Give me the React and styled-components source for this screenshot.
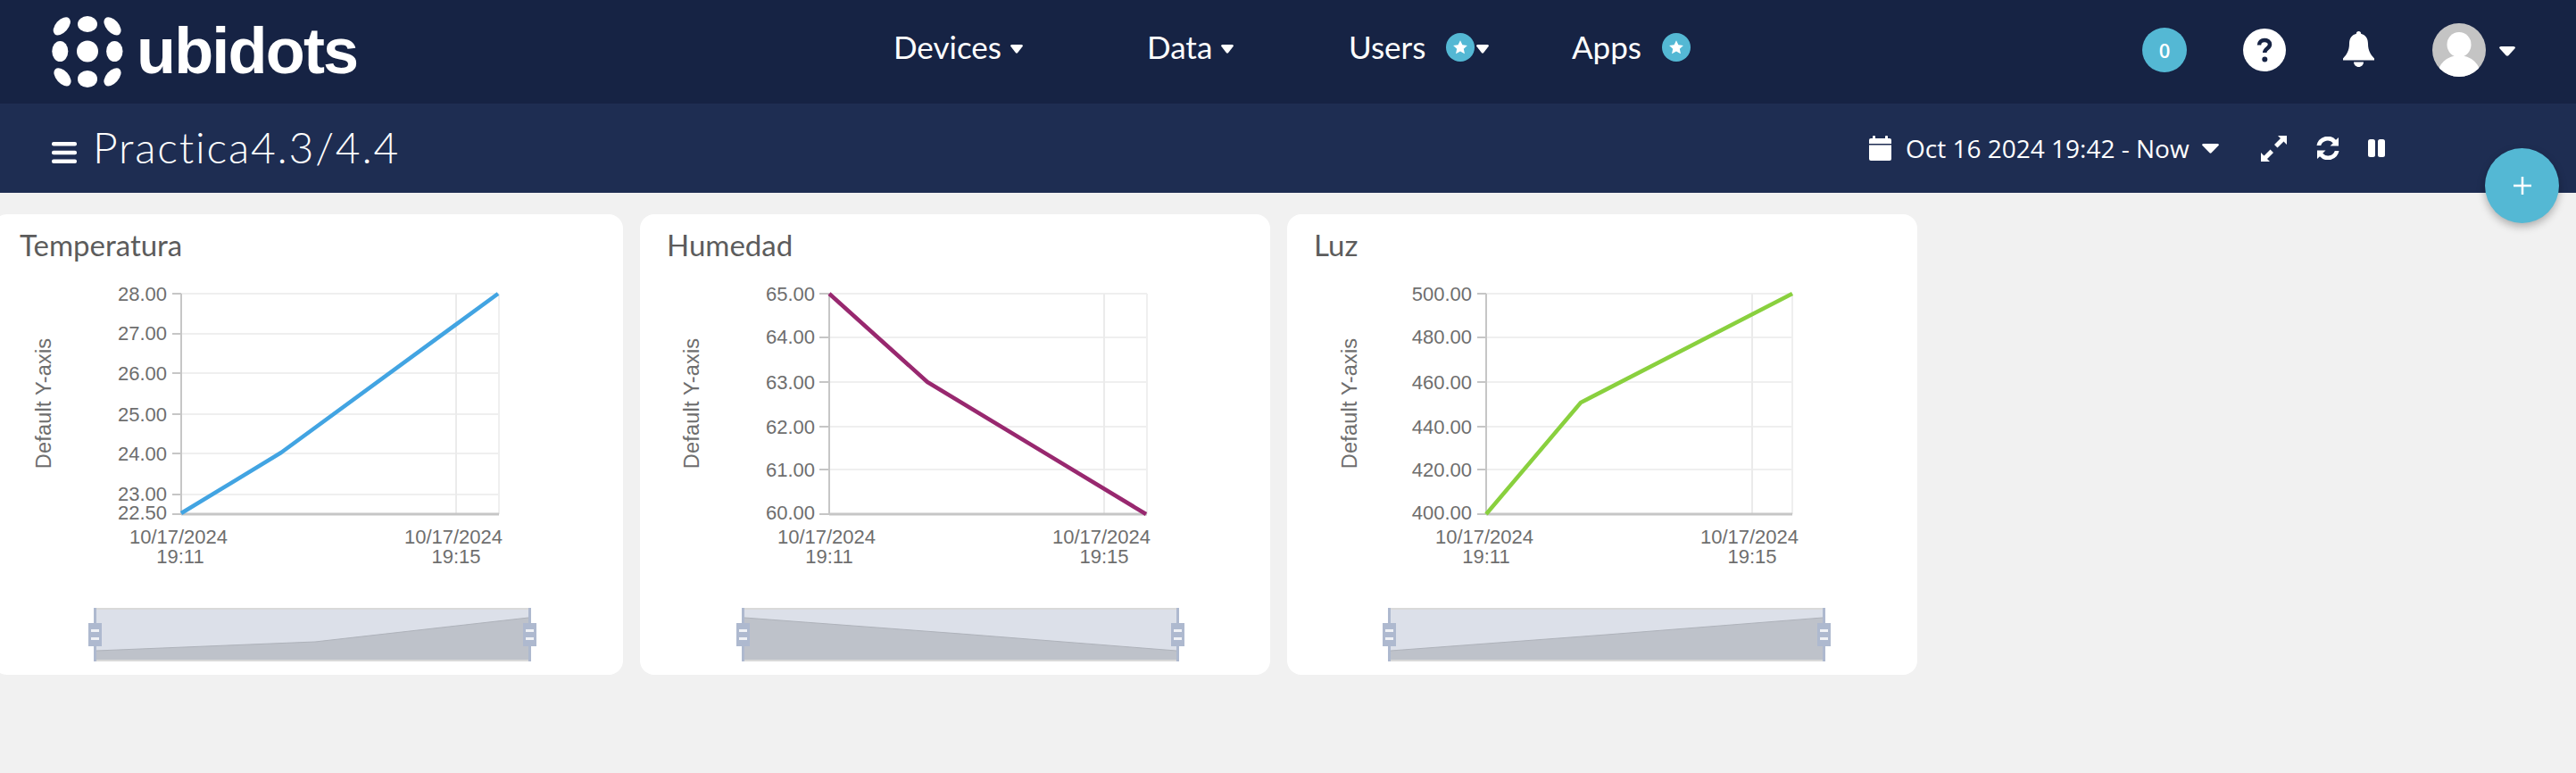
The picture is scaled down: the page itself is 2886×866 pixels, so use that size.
import React from 'react';
import styled, { createGlobalStyle } from 'styled-components';

const Global = createGlobalStyle`
  html, body { margin: 0; padding: 0; background: #f1f1f1; }
  body { width: 2886px; height: 866px; overflow: hidden; font-family: "Lato", "Liberation Sans", sans-serif; }
`;

const Page = styled.div`
  position: relative;
  width: 2886px;
  height: 866px;
  background: #f1f1f1;
  overflow: hidden;
`;

const TopBar = styled.header`
  display: flex;
  align-items: center;
  height: 116px;
  background: #162344;
  color: #fff;
  padding-left: 58px;
  box-sizing: border-box;
`;

const Logo = styled.div`
  display: flex;
  align-items: center;
  gap: 15px;
  width: 943px;
  flex: none;
  height: 100%;
`;

const LogoText = styled.span`
  font-family: "Liberation Sans", Arial, sans-serif;
  font-weight: 700;
  font-size: 72px;
  line-height: 1;
  letter-spacing: -1.8px;
  color: #fff;
  margin-top: -2px;
`;

const NavItem = styled.div`
  display: flex;
  align-items: center;
  width: ${p => p.$width}px;
  flex: none;
  font-size: 35px;
  font-weight: 400;
  gap: 10px;
  margin-top: -13px;
`;

const NavCaret = styled.svg`
  width: 14px;
  height: 10px;
  fill: #fff;
  flex: none;
  margin-top: 7px;
`;

const AvatarCaret = styled.svg`
  width: 18px;
  height: 11px;
  fill: #fff;
  flex: none;
  margin-top: -1px;
`;

const StarBadge = styled.span`
  display: inline-flex;
  align-items: center;
  justify-content: center;
  width: 32px;
  height: 32px;
  border-radius: 50%;
  background: #54b8d4;
  margin: 3px -8px 0 13px;
  flex: none;
`;

const RightGroup = styled.div`
  display: flex;
  align-items: center;
  position: absolute;
  right: 68px;
  top: 0;
  height: 116px;
`;

const CountBadge = styled.span`
  width: 50px;
  height: 50px;
  border-radius: 50%;
  background: #54b8d4;
  display: flex;
  align-items: center;
  justify-content: center;
  font-family: "Open Sans", sans-serif;
  font-size: 22px;
  font-weight: 600;
  color: #fff;
  margin-right: 63px;
  margin-top: -4px;
`;

const HelpIcon = styled.svg`
  width: 48px;
  height: 48px;
  margin-right: 64px;
  margin-top: -4px;
`;

const BellIcon = styled.svg`
  width: 35px;
  height: 40px;
  margin-right: 65px;
  margin-top: -6px;
`;

const Avatar = styled.svg`
  width: 60px;
  height: 60px;
  margin-right: 15px;
  margin-top: -4px;
`;

const SubBar = styled.div`
  display: flex;
  align-items: center;
  height: 100px;
  background: #1e2d52;
  color: #fff;
  padding-left: 58px;
  box-sizing: border-box;
`;

const Burger = styled.svg`
  width: 28px;
  height: 24px;
  flex: none;
  margin-top: 10px;
`;

const PageTitle = styled.h1`
  margin: -3px 0 0 18px;
  font-family: "Lato", sans-serif;
  font-size: 48px;
  font-weight: 300;
  color: #fff;
  letter-spacing: 1.8px;
  line-height: 1;
  width: 1990px;
  flex: none;
`;

const DateRange = styled.div`
  display: flex;
  align-items: center;
  font-family: "Open Sans", sans-serif;
  font-size: 28px;
  color: #fff;
`;

const CalendarIcon = styled.svg`
  width: 25px;
  height: 28px;
  margin-right: 16px;
`;

const DateCaret = styled.svg`
  width: 19px;
  height: 11px;
  fill: #fff;
  margin-left: 14px;
  margin-right: 47px;
`;

const ToolIcon = styled.svg`
  width: ${p => p.$w}px;
  height: ${p => p.$h}px;
  margin-right: ${p => p.$mr || 0}px;
`;

const Fab = styled.button`
  position: absolute;
  left: 2784px;
  top: 166px;
  width: 83px;
  height: 84px;
  border: 0;
  padding: 0;
  border-radius: 50%;
  background: #54b8d4;
  box-shadow: 0 4px 10px rgba(0, 0, 0, 0.28);
  display: flex;
  align-items: center;
  justify-content: center;
`;

const Board = styled.main`
  display: flex;
  gap: 19px;
  margin-left: -8px;
  padding-top: 24px;
`;

const Card = styled.section`
  display: flex;
  flex-direction: column;
  width: 706px;
  height: 516px;
  flex: none;
  background: #fff;
  border-radius: 16px;
  box-sizing: border-box;
  overflow: hidden;
`;

const CardTitle = styled.h2`
  margin: 0;
  padding: 14px 0 0 30px;
  height: 70px;
  box-sizing: border-box;
  font-family: "Lato", sans-serif;
  font-size: 33px;
  line-height: 40px;
  font-weight: 400;
  color: #5c5c5c;
`;

const ChartSvg = styled.svg`
  display: block;
  flex: 1;
  width: 100%;
  font-family: "Liberation Sans", Arial, sans-serif;
`;

const CHART_TOP = 310;

function Chart({ c }) {
  const { left, right, vgrid, ylabelX, labelEnd, tickStart, ticks, line, color, xLabels, nav, navSeries } = c;
  const y = v => v - CHART_TOP;
  const pts = line.map(([a, b]) => `${a - c.ox},${y(b)}`).join(' ');
  const l = left - c.ox, r = right - c.ox;
  const yTop = y(329), yBot = y(576);
  const navL = nav[0] - c.ox, navR = nav[1] - c.ox;
  const navT = y(681), navB = y(741);
  const sPts = navSeries.map(([a, b]) => `${a - c.ox},${y(b)}`).join(' ');
  const handle = x => (
    <g key={x}>
      <rect x={x - 8} y={y(698)} width={15} height={26} fill="#aeb9cf" />
      <rect x={x - 5} y={y(705)} width={9} height={3} fill="#f0f2f6" />
      <rect x={x - 5} y={y(714)} width={9} height={3} fill="#f0f2f6" />
    </g>
  );
  return (
    <ChartSvg viewBox="0 0 706 446">
      {ticks.map(t => (
        <g key={t.label}>
          <line x1={tickStart - c.ox} x2={r} y1={y(t.y)} y2={y(t.y)} stroke={t.y === 576 ? '#c6c6c6' : '#efefef'} strokeWidth="2" />
          <line x1={tickStart - c.ox} x2={l} y1={y(t.y)} y2={y(t.y)} stroke="#c6c6c6" strokeWidth="2" />
          <text x={labelEnd - c.ox} y={y(t.ly ?? t.y) + 8} textAnchor="end" fontSize="22" fill="#6e6e6e">{t.label}</text>
        </g>
      ))}
      <line x1={vgrid - c.ox} x2={vgrid - c.ox} y1={yTop} y2={yBot} stroke="#ebebeb" strokeWidth="2" />
      <line x1={r} x2={r} y1={yTop} y2={yBot} stroke="#efefef" strokeWidth="2" />
      <line x1={l} x2={l} y1={yTop} y2={yBot} stroke="#c6c6c6" strokeWidth="2" />
      <line x1={l} x2={r} y1={yBot} y2={yBot} stroke="#c6c6c6" strokeWidth="3" />
      <polyline points={pts} fill="none" stroke={color} strokeWidth="4.5" strokeLinejoin="round" />
      <text transform={`translate(${ylabelX - c.ox},${y(452)}) rotate(-90)`} textAnchor="middle" fontSize="23.5" letterSpacing="0.2" fill="#6e6e6e">Default Y-axis</text>
      {xLabels.map(x => (
        <g key={x.t} fontSize="22" fill="#6e6e6e" textAnchor="middle">
          <text x={x.dx - c.ox} y={y(609)}>10/17/2024</text>
          <text x={x.tx - c.ox} y={y(631)}>{x.t}</text>
        </g>
      ))}
      <rect x={navL} y={navT} width={navR - navL} height={navB - navT} fill="#dce0e9" />
      <polygon points={sPts} fill="#bec2ca" />
      <polyline points={navSeries.slice(0, -2).map(([a, b]) => `${a - c.ox},${y(b)}`).join(' ')} fill="none" stroke="#aeb2ba" strokeWidth="1" />
      <rect x={navL} y={navT} width={navR - navL} height={2} fill="#d9d9d9" />
      <rect x={navL} y={navB - 2} width={navR - navL} height={2} fill="#d9d9d9" />
      <rect x={navL} y={navT} width={3} height={navB - navT} fill="#aeb9cf" />
      <rect x={navR - 3} y={navT} width={3} height={navB - navT} fill="#aeb9cf" />
      {handle(navL + 2)}
      {handle(navR - 1)}
    </ChartSvg>
  );
}

const navS = (x0, mid, x1, a, b, c) => [[x0, a], [mid, b], [x1, c], [x1, 739], [x0, 739]];

const charts = [
  {
    ox: -8, title: 'Temperatura', left: 203, right: 559, vgrid: 511, ylabelX: 57, labelEnd: 187, tickStart: 193, color: '#42a4e2',
    ticks: [
      { label: '28.00', y: 329 }, { label: '27.00', y: 374, ly: 373 }, { label: '26.00', y: 418 }, { label: '25.00', y: 464 },
      { label: '24.00', y: 508 }, { label: '23.00', y: 554, ly: 553 }, { label: '22.50', y: 576, ly: 574 },
    ],
    line: [[203, 575], [315, 507], [558, 329]],
    xLabels: [{ dx: 200, tx: 202, t: '19:11' }, { dx: 508, tx: 511, t: '19:15' }],
    nav: [105, 595], navSeries: navS(108, 353, 592, 729, 719, 692),
  },
  {
    ox: 717, title: 'Humedad', left: 929, right: 1285, vgrid: 1237, ylabelX: 783, labelEnd: 913, tickStart: 918, color: '#98286f',
    ticks: [
      { label: '65.00', y: 329 }, { label: '64.00', y: 378, ly: 377 }, { label: '63.00', y: 428 }, { label: '62.00', y: 478 },
      { label: '61.00', y: 526 }, { label: '60.00', y: 576, ly: 574 },
    ],
    line: [[929, 329], [1039, 428], [1284, 576]],
    xLabels: [{ dx: 926, tx: 929, t: '19:11' }, { dx: 1234, tx: 1237, t: '19:15' }],
    nav: [831, 1321], navSeries: navS(834, 1076, 1318, 692, 710, 729),
  },
  {
    ox: 1442, title: 'Luz', left: 1665, right: 2008, vgrid: 1963, ylabelX: 1520, labelEnd: 1649, tickStart: 1655, color: '#89d03e',
    ticks: [
      { label: '500.00', y: 329 }, { label: '480.00', y: 378, ly: 377 }, { label: '460.00', y: 428 }, { label: '440.00', y: 478 },
      { label: '420.00', y: 526 }, { label: '400.00', y: 576, ly: 574 },
    ],
    line: [[1665, 576], [1771, 451], [2008, 329]],
    xLabels: [{ dx: 1663, tx: 1665, t: '19:11' }, { dx: 1960, tx: 1963, t: '19:15' }],
    nav: [1555, 2045], navSeries: navS(1558, 1800, 2042, 729, 711, 692),
  },
];

const CARET_PATH = 'M0 1.5Q0 0 1.5 0h11Q14 0 14 1.5L8 9.3Q7 10.2 6 9.3Z';

const Caret = () => (
  <NavCaret viewBox="0 0 14 10"><path d={CARET_PATH} /></NavCaret>
);

const Star = () => (
  <svg width="18" height="18" viewBox="0 0 24 24" fill="#fff"><path d="M12 1.5l3.2 6.8 7.3.9-5.4 5 1.5 7.3L12 18l-6.6 3.5 1.5-7.3-5.4-5 7.3-.9z" /></svg>
);

function LogoMark() {
  return (
    <svg width="80" height="80" viewBox="0 0 80 80" fill="#fff">
      <ellipse cx="40" cy="9" rx="11" ry="9" />
      <ellipse cx="40" cy="39.5" rx="12" ry="12" />
      <ellipse cx="40" cy="70.5" rx="11" ry="9.500" />
      <ellipse cx="9.300" cy="39.500" rx="9" ry="11.500" />
      <ellipse cx="70.300" cy="39.500" rx="9.200" ry="11.500" />
      <ellipse cx="11.300" cy="11.300" rx="7" ry="12" transform="rotate(42 11.300 11.300)" />
      <ellipse cx="68" cy="11.300" rx="7" ry="12" transform="rotate(-42 68 11.300)" />
      <ellipse cx="12" cy="68.300" rx="7" ry="12" transform="rotate(-42 12 68.300)" />
      <ellipse cx="68" cy="68.300" rx="7" ry="12" transform="rotate(42 68 68.300)" />
    </svg>
  );
}

export default function App() {
  return (
    <Page>
      <Global />
      <TopBar>
        <Logo>
          <LogoMark />
          <LogoText>ubidots</LogoText>
        </Logo>
        <NavItem $width={284}>Devices <Caret /></NavItem>
        <NavItem $width={226}>Data <Caret /></NavItem>
        <NavItem $width={250}>Users <StarBadge><Star /></StarBadge><Caret /></NavItem>
        <NavItem $width={200}>Apps <StarBadge><Star /></StarBadge></NavItem>
        <RightGroup>
          <CountBadge>0</CountBadge>
          <HelpIcon viewBox="0 0 48 48">
            <circle cx="24" cy="24" r="24" fill="#fff" />
            <path d="M18 18.500c0-3.600 2.700-5.500 6-5.500 3.400 0 6 1.900 6 4.800 0 4.400-5.800 4.400-5.800 9.200" fill="none" stroke="#162344" strokeWidth="4.500" />
            <circle cx="24.300" cy="34.500" r="3" fill="#162344" />
          </HelpIcon>
          <BellIcon viewBox="0 0 35 40">
            <path d="M17.500 0c1.600 0 2.600 1 2.600 2.800C25.500 4.200 28 8.500 28 14c0 8 3 12 7 16.500V32.500H0v-2C4 26 7 22 7 14 7 8.500 9.500 4.200 14.900 2.800 14.900 1 15.900 0 17.500 0z" fill="#fff" />
            <path d="M12 34.500h11c0 3-2.500 5.500-5.500 5.500S12 37.500 12 34.500z" fill="#fff" />
          </BellIcon>
          <Avatar viewBox="0 0 60 60">
            <defs><clipPath id="avatarClip"><circle cx="30" cy="30" r="30" /></clipPath></defs>
            <circle cx="30" cy="30" r="30" fill="#c4c4c4" />
            <g clipPath="url(#avatarClip)" fill="#fff">
              <ellipse cx="30" cy="24" rx="13.500" ry="14" />
              <ellipse cx="30" cy="58" rx="24" ry="22" />
            </g>
          </Avatar>
          <AvatarCaret viewBox="0 0 14 10" preserveAspectRatio="none"><path d={CARET_PATH} /></AvatarCaret>
        </RightGroup>
      </TopBar>
      <SubBar>
        <Burger viewBox="0 0 28 24" fill="#fff">
          <rect width="28" height="4.500" rx="2" />
          <rect y="9.750" width="28" height="4.500" rx="2" />
          <rect y="19.500" width="28" height="4.500" rx="2" />
        </Burger>
        <PageTitle>Practica4.3/4.4</PageTitle>
        <DateRange>
          <CalendarIcon viewBox="0 0 25 28" fill="#fff">
            <rect x="4" y="0" width="3" height="6" rx="1" />
            <rect x="18" y="0" width="3" height="6" rx="1" />
            <path d="M2 3h21a2 2 0 0 1 2 2v4H0V5a2 2 0 0 1 2-2z" />
            <path d="M0 10.500h25V26a2 2 0 0 1-2 2H2a2 2 0 0 1-2-2z" />
          </CalendarIcon>
          Oct 16 2024 19:42 - Now
          <DateCaret viewBox="0 0 19 11"><path d="M0 1.500Q0 0 1.500 0h16Q19 0 19 1.500L10.500 10.300Q9.500 11 8.500 10.300Z" /></DateCaret>
          <ToolIcon $w={29} $h={29} $mr={32} viewBox="0 0 29 29" fill="#fff">
            <path d="M19 0h10v10l-3.500-3.500-7 7-3.500-3.500 7-7z" />
            <path d="M10 29H0V19l3.500 3.500 7-7 3.500 3.500-7 7z" />
          </ToolIcon>
          <ToolIcon $w={28} $h={26} $mr={31} viewBox="0 0 28 26" fill="#fff">
            <path d="M26 1v9.500h-9.500l3.300-3.300A8 8 0 0 0 6.200 10H1.500A12.500 12.500 0 0 1 23 3.800z" />
            <path d="M2 25v-9.500h9.500l-3.300 3.300A8 8 0 0 0 21.800 16h4.700A12.500 12.500 0 0 1 5 22.200z" />
          </ToolIcon>
          <ToolIcon $w={19} $h={20} viewBox="0 0 19 20" fill="#fff">
            <rect width="8" height="20" rx="2.500" />
            <rect x="11" width="8" height="20" rx="2.500" />
          </ToolIcon>
        </DateRange>
      </SubBar>
      <Fab aria-label="Add">
        <svg width="20" height="20" viewBox="0 0 20 20" stroke="#fff" strokeWidth="2.500"><path d="M10 0v20M0 10h20" /></svg>
      </Fab>
      <Board>
        {charts.map(c => (
          <Card key={c.title}>
            <CardTitle>{c.title}</CardTitle>
            <Chart c={c} />
          </Card>
        ))}
      </Board>
    </Page>
  );
}
